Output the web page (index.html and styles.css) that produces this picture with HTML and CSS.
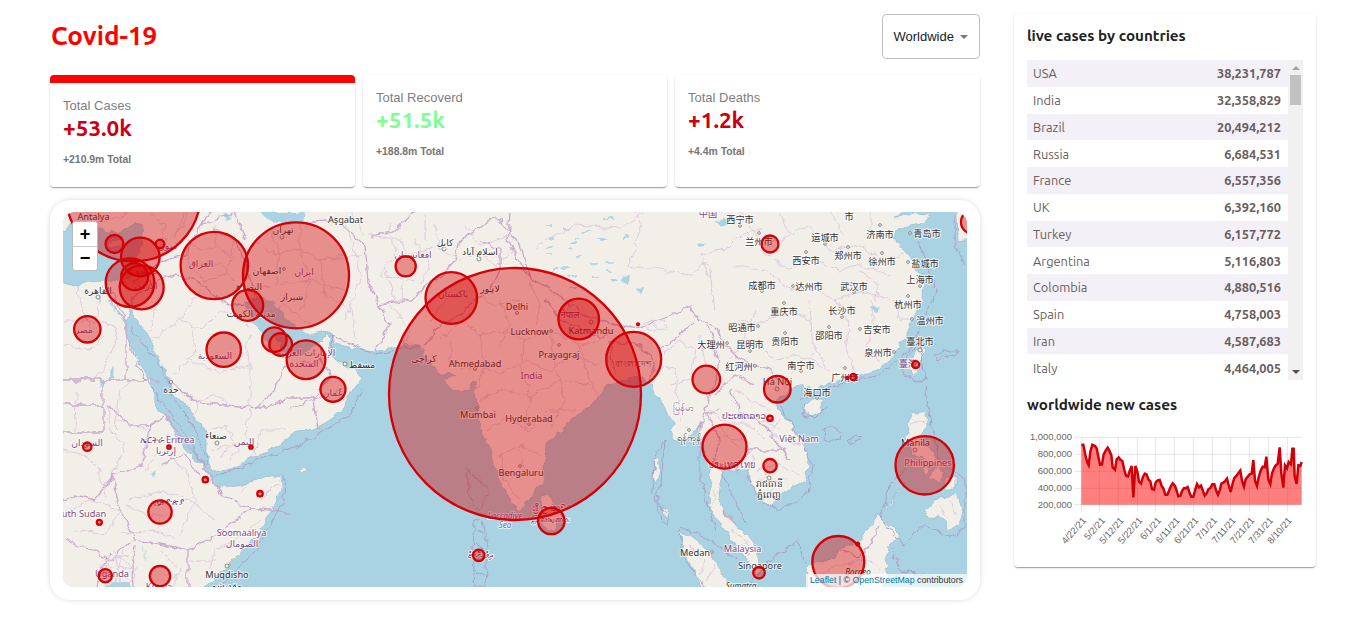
FILE: index.html
```html
<!DOCTYPE html>
<html lang="en">
<head>
<meta charset="utf-8">
<title>Covid-19</title>
<link rel="stylesheet" href="styles.css">
</head>
<body>
<div class="app">
  <main class="left">
    <header class="header">
      <h1>Covid-19</h1>
      <div class="select"><span>Worldwide</span><i class="caret"></i></div>
    </header>
    <section class="stats">
      <article class="card stat active"><p class="label">Total Cases</p><h2>+53.0k</h2><p class="total">+210.9m Total</p></article>
      <article class="card stat"><p class="label">Total Recoverd</p><h2 class="green">+51.5k</h2><p class="total">+188.8m Total</p></article>
      <article class="card stat"><p class="label">Total Deaths</p><h2>+1.2k</h2><p class="total">+4.4m Total</p></article>
    </section>
    <section class="map-frame">
      <div class="map">
        <svg class="map-svg" viewBox="63 212 904 375" width="904" height="375">
          <defs>
            <filter id="rough" filterUnits="userSpaceOnUse" x="43" y="192" width="944" height="415">
              <feTurbulence type="fractalNoise" baseFrequency="0.11" numOctaves="2" seed="7" result="n"/>
              <feDisplacementMap in="SourceGraphic" in2="n" scale="8" xChannelSelector="R" yChannelSelector="G"/>
            </filter>
          </defs>
          <rect x="63" y="212" width="904" height="375" fill="#a9d2e2"/>
          <g filter="url(#rough)">
            <g class="land">
              <path d="M50 283 63 283 75 287 87 282 107 281 120 280 130 278 133 270 137 258 141 243 143 224 133 225 117 235 98 227 80 228 72 224 63 231 50 228V190H905V212L895 216 907 215 930 213 927 221 898 230 893 237 903 248 913 260 923 283 922 297 913 320 903 340 890 360 877 370 857 377 837 382 820 387 812 397 808 385 790 388 780 397 777 407 790 423 803 440 808 460 807 480 783 493 770 507 753 487 747 470 723 470 718 493 722 510 730 522 743 530 753 543 762 566 757 574 740 552 730 535 717 520 709 505 712 480 705 452 697 429 683 442 672 440 673 423 667 410 655 393 643 376 623 380 607 385 605 392 590 405 573 418 560 433 546 444 543 483 533 493 525 505 518 512 507 495 497 473 490 450 480 427 476 400 474 380 469 388 460 393 452 389 443 379 455 375 440 374 433 367 423 354 421 344 393 347 375 351 353 348 335 344 330 331 313 335 295 326 285 318 273 301 262 297 245 302 250 315 262 335 270 346 274 334 281 342 280 355 290 354 307 353 319 342 328 333 332 355 338 363 355 368 361 378 348 397 342 411 330 420 317 428 293 433 280 445 267 452 250 459 230 469 212 471 207 457 207 437 200 423 187 405 173 396 168 377 157 357 147 332 134 318 132 300 127 322 112 306 109 298 125 323 130 343 140 363 150 380 155 400 157 408 168 418 175 433 187 450 200 463 208 472 210 480 218 488 237 485 263 477 281 474 282 490 270 513 257 537 230 563 203 590V610H50Z"/>
              <path d="M108 243 115 240 123 238 119 246 111 248Z"/>
              <path d="M541 494 551 500 560 515 557 529 548 532 542 523Z"/>
              <path d="M680 532 690 536 707 549 716 562 724 577 732 590H703L688 560Z"/>
              <path d="M803 407 814 398 825 400 820 412 811 417 803 413Z"/>
              <path d="M922 346 925 350 920 366 914 380 909 367 914 353Z"/>
              <path d="M911 413 925 410 928 424 921 438 928 450 940 458 940 465 925 460 913 454 906 436Z"/>
              <path d="M920 464 928 466 930 473 924 477Z M935 468 945 473 939 482 931 478Z M905 481 900 492 886 506 878 515 892 503Z M945 478 955 475 955 488 946 491Z"/>
              <path d="M925 512 933 500 949 498 957 492 963 512 958 525 949 530 943 518 930 517Z"/>
              <path d="M808 590 806 568 815 562 830 560 842 548 858 543 866 530 879 516 889 524 900 535 889 545 885 560 888 575 882 590Z"/>
              <path d="M952 200 957 215 958 240 967 240 980 200Z M298 469 304 466 307 469 301 472Z"/>
              <path d="M655 460 660 458 659 475 656 485 653 476Z M662 508 667 510 668 518 663 516Z"/>
            </g>
            <path class="water" d="M257 212 306 212 304 224 285 225 270 220Z M224 212 230 217 228 220 222 214Z M718 220 725 219 728 224 721 226Z M98 388 107 380 115 364 114 378 100 381Z M142 545 149 565 146 558 142 547Z M105 588 112 582 128 583 130 590Z M150 472 157 472 154 477Z M623 277 629 275 628 283 621 282Z M610 280 616 278 618 280 612 282Z M636 289 644 288 640 293Z M872 305 880 306 876 312 869 307Z M160 517 158 528 156 533Z M697 244 706 243 705 246 699 247Z"/>
            <g class="speckle"><path d="M545 225h7m12 3h6m13 4h8m-43 6h5m18 5h6m20-3h9m-60 14h7m25 2h5m7 7h8m-46 7h6m10 5h8m16 2h7m-31 10h8m6 3h5m19-27h8m-8 8h6m12-35h5m-25-18h9m-52 50h8m-1-19h4m30-8h6m-60 5h5m22-7h4m60-28h5"/></g>
            <g class="border">
              <path d="M63 380H160M126 325V380M63 432H103V405H63M132 283 160 262 185 255 200 225 212 212M131 300 165 275 192 278 230 306 248 305M215 230 235 240 246 262 252 285 258 300M200 225 235 212 246 240M168 378 180 390 195 402 260 408 290 398 314 398 331 376 320 360 285 368M314 398 318 430M290 408 345 388M255 410 275 390 285 365M105 281 128 325M103 405V380M107 405 130 425 150 425 165 415 180 435 205 465 213 484 223 495 250 508 290 512M150 425 142 465 122 472 114 475 95 500 75 495 63 500M112 473 120 510 135 540 165 545 188 550 215 535 250 510M188 550V590M135 545 132 565 133 590M63 540 90 550 110 560 132 540M160 465 185 455 200 475M95 590 100 570 112 553"/>
              <path d="M303 223 335 220 365 245 368 282 378 304 412 300 425 285 440 278 455 260 460 240 478 230 495 215M378 304 390 325 375 350M372 236 395 230 415 212M425 345 440 325 460 315 475 300 490 290 500 270 500 250 480 240M495 215 520 245 530 278 560 297 590 318 615 325 640 328 660 320 690 307 700 320 715 325 725 345 740 360 770 370 785 387M530 278 518 260 508 240 510 212M545 300 560 318 600 338 615 330M610 340 615 375M610 340 640 345 655 365 650 385M660 350 680 335 693 320M708 325 720 365 710 395 705 410 720 440 710 470M720 410 705 415 696 433M730 390 740 410 760 420 775 440 790 460M740 465 750 450 785 450M715 395 735 375 755 385M740 475 735 465M843 550 858 558 870 545 879 527M722 510 735 525"/>
            </g>
            <g class="province">
              <path d="M63 320H90L118 328 115 345 96 380M95 320 103 285M75 285 90 330M130 346 160 335 180 320 200 290M160 262 165 240 180 230 190 212M165 275 150 330M180 320 200 330 220 310 250 325M190 360 218 372 250 365 245 345 252 335M172 375 195 355 193 330M250 365V408M200 400 188 425M195 402 215 395 230 405M63 345 90 350 105 335M75 390 76 430M108 405 110 430 125 445 112 475M63 450 85 455 98 468 105 495M115 420 150 430 140 465M63 515 90 500 120 510 105 535 75 530M115 430 120 390 130 380M120 535 150 530 175 538M130 500 160 490 190 500 215 520M145 470 160 450 185 470 195 500 180 535M125 505 145 515 175 515M210 570 215 550 235 540 260 520M190 560 215 560M250 410 245 440 230 460M210 430 225 425 235 440 220 460M210 450 230 445M255 455 260 430 285 430M260 500 280 480M240 495 245 485M100 575 115 555 125 560 135 575 120 590M105 560 130 555M115 550 120 585M100 565 135 570M125 550 115 585M160 550 180 570 170 590"/>
              <path d="M185 235 200 250 215 245 232 258 225 275 205 280 190 265 185 245M215 225 216 245M200 262 220 265 235 280M235 235 230 255M255 240 275 255 300 248 320 260 345 255M270 230 280 255 275 285 255 290M300 225 300 250 310 280 300 310M280 285 310 280 345 290M320 260 325 295 350 310M345 225 355 250 360 280 345 320M370 235 400 240 410 255 440 245M390 225 395 255 380 275 415 280M405 280 400 300M415 240 430 265 420 285M435 225 440 250 460 260M465 225 480 245 510 235M475 250 495 265 515 250M385 270 395 300M425 215 425 240M350 300 355 340M390 305 410 330 405 345M330 260 365 255M350 212 365 235M265 310 285 305 310 325M150 212 165 225 160 250M85 212 100 225 130 212M185 212 175 240"/>
              <path d="M440 340 465 320 480 335 500 330 525 340 550 330 580 345 600 340M460 370 480 365 500 375 525 360 550 370 570 355 600 365M480 400 500 390 530 395 560 380 590 385M485 430 505 420 530 430 550 410 575 410M500 455 520 445 540 455M500 455 505 480 520 500M520 445 525 470 540 475M480 335 485 365 475 390M525 340 520 365 530 395 525 430M550 330 555 365 565 400 550 430M580 345 590 380 600 400M500 300 510 325 500 345M530 280 540 305 535 325M430 320 445 300 470 290 495 305 520 300M450 340 450 365"/>
              <path d="M637 212 640 230 630 265 660 270 690 275 705 262 710 270 715 310M545 240 575 225 620 228 645 212M710 280 700 255 725 250 740 235 765 230M535 250 545 240M740 212 755 235 780 240 810 225 830 250 860 245 880 260 905 255M760 250 790 270 810 260 840 270 860 265 890 275M735 265 765 270 790 290 810 285 835 300 860 290 890 300M810 300 812 340 825 365M835 300 850 325 845 350 855 370M870 300 875 325 865 345 880 360M740 320 760 325 785 310 812 320M755 340 775 360 800 355 830 370M730 360 745 335 755 310M790 375 815 355M780 212 790 235M830 212 845 235M870 212 870 235 890 235M860 270 880 285 875 300M892 300 900 320 915 320M665 355 680 340 695 350 690 380 670 385M660 365 675 370 680 420 690 430M700 335 705 365M710 410 730 425 750 425 765 440M720 435 745 440 755 460M735 390 750 400 770 410M780 420 770 435 800 445M755 470 780 465 800 475M760 480 785 480M730 400 745 415M720 425 740 450M715 490 712 510M730 530 745 540 750 555M735 545 750 548M690 545 705 560 700 575M715 565 705 580M645 322 665 320 667 330 648 331ZM655 320V330M912 425 925 422M915 440 928 435M950 500 955 515M940 505 948 520M820 575 840 565 870 560 880 570M755 415 780 430M765 470 775 500"/>
            </g>
            <g class="maritime">
              <path d="M130 328 140 340 160 365 172 395 195 430 208 465M126 335 140 370 160 400 190 440 205 470M213 478 245 465 300 445 350 415 362 390M285 475 284 500 255 550 220 587M335 355 330 335 375 354 420 346M466 470 487 487 486 500 479 510 469 495ZM474 520 482 522 487 545 485 587 475 587 473 555ZM476 530 486 535M475 545 486 550M476 573 486 574M655 455 665 440 661 480 656 500 670 520 668 525 660 518 652 490ZM680 527 705 537 735 560M680 530 683 558 705 587M700 420 700 480 710 510 715 530M720 470 740 510 745 525M747 475 760 500 780 510 808 494 812 465 795 430 780 405M800 400 818 395 835 385 880 375 910 350 937 290 918 240M805 405 802 415 815 418 828 405M900 365 920 342 925 380 912 383ZM925 386 931 425 940 460 965 480 965 530 950 537 925 525 902 545 880 516 890 485 905 470M825 430 830 425 842 432 840 440 824 442ZM848 440 858 434 861 437 852 443ZM745 590 765 565 798 540 805 565M892 547 900 570 945 580M955 215 955 245 965 265M935 355 948 350 957 350 955 357 945 355 938 361Z"/>
            </g>
          </g>

          <g class="dots"><circle cx="98" cy="297" r="2"/><circle cx="171" cy="382" r="1.6"/><circle cx="217" cy="443" r="2"/><circle cx="227" cy="566" r="2"/><circle cx="282" cy="237" r="2"/><circle cx="284" cy="269" r="1.4"/><circle cx="444" cy="249" r="2"/><circle cx="479" cy="259" r="2"/><circle cx="345" cy="364" r="2"/><circle cx="517" cy="313" r="1.5"/><circle cx="551" cy="331" r="1.4"/><circle cx="559" cy="345" r="1.4"/><circle cx="591" cy="322" r="2"/><circle cx="475" cy="369" r="1.5"/><circle cx="477" cy="408" r="1.4"/><circle cx="529" cy="424" r="1.4"/><circle cx="520" cy="466" r="1.4"/><circle cx="689" cy="430" r="1.4"/><circle cx="712" cy="552" r="1.4"/><circle cx="740" cy="226" r="1.4"/><circle cx="759" cy="233" r="1.4"/><circle cx="825" cy="244" r="1.4"/><circle cx="806" cy="252" r="1.4"/><circle cx="848" cy="247" r="1.4"/><circle cx="880" cy="225" r="1.4"/><circle cx="910" cy="233" r="1.4"/><circle cx="882" cy="253" r="1.4"/><circle cx="908" cy="262" r="1.4"/><circle cx="920" cy="286" r="1.4"/><circle cx="908" cy="296" r="1.4"/><circle cx="912" cy="319" r="1.4"/><circle cx="793" cy="286" r="1.4"/><circle cx="762" cy="291" r="1.4"/><circle cx="784" cy="303" r="1.4"/><circle cx="854" cy="292" r="1.4"/><circle cx="842" cy="317" r="1.4"/><circle cx="829" cy="327" r="1.4"/><circle cx="785" cy="333" r="1.4"/><circle cx="860" cy="329" r="1.4"/><circle cx="894" cy="352" r="1.4"/><circle cx="920" cy="350" r="2"/><circle cx="727" cy="343" r="1.4"/><circle cx="758" cy="326" r="1.4"/><circle cx="750" cy="351" r="1.4"/><circle cx="755" cy="366" r="1.4"/><circle cx="801" cy="371" r="1.4"/><circle cx="845" cy="368" r="1.4"/><circle cx="817" cy="398" r="1.4"/><circle cx="777" cy="389" r="2"/><circle cx="769" cy="478" r="2"/><circle cx="915" cy="450" r="2"/></g>
          <g class="city">
            <text x="93.500" y="220">Antalya</text><text x="98" y="294">القاهرة</text><text x="283" y="233">تهران</text><text x="267" y="274">اصفهان</text><text x="292" y="300">شیراز</text><text x="249" y="290">البصرة</text><text x="251" y="317">مدينة الكويت</text><text x="171" y="393">جدة</text><text x="216" y="439">صنعاء</text><text x="227" y="578">Muqdisho</text><text x="227" y="589">مقديشو</text><text x="345.500" y="223">Aşgabat</text><text x="445" y="246">کابل</text><text x="480" y="255">اسلام آباد</text><text x="362" y="368">مسقط</text><text x="490" y="292">لاہور</text><text x="424" y="362">کراچی</text><text x="517" y="309.500">Delhi</text><text x="529.500" y="334.500">Lucknow</text><text x="591" y="334">Katmandu</text><text x="559" y="357.500">Prayagraj</text><text x="475" y="366.500">Ahmedabad</text><text x="478" y="418">Mumbai</text><text x="529" y="421.500">Hyderabad</text><text x="521" y="476">Bengaluru</text><text x="689" y="441">ရန်ကုန်</text><text x="695" y="556">Medan</text><text x="760" y="569">Singapore</text><text x="741" y="588.500" class="italic">Sumatra</text><text x="858" y="575" class="italic">Borneo</text><text x="777.500" y="384.500">Hà Nội</text><text x="769" y="487">រាជធានី</text><text x="769" y="498">ភ្នំពេញ</text><text x="915.500" y="446">Manila</text>
            <text x="740" y="223">西宁市</text><text x="849" y="220">市</text><text x="759" y="245">兰州市</text><text x="825" y="241">运城市</text><text x="880" y="238">济南市</text><text x="927" y="237">青岛市</text><text x="806" y="264">西安市</text><text x="848" y="259">郑州市</text><text x="882" y="265">徐州市</text><text x="925" y="267">盐城市</text><text x="920" y="283">上海市</text><text x="762" y="289">成都市</text><text x="809" y="290">达州市</text><text x="854" y="290">武汉市</text><text x="908" y="308">杭州市</text><text x="784" y="315">重庆市</text><text x="842" y="314">长沙市</text><text x="930" y="324">温州市</text><text x="742" y="330.500">昭通市</text><text x="829" y="339">邵阳市</text><text x="877" y="333">吉安市</text><text x="711" y="348">大理州</text><text x="750" y="348">昆明市</text><text x="785" y="345">贵阳市</text><text x="878" y="356">泉州市</text><text x="920" y="345">臺北市</text><text x="739" y="370">红河州</text><text x="801" y="369">南宁市</text><text x="845" y="381">广州市</text><text x="817" y="396">海口市</text>
          </g>
          <g class="country">
            <text x="201" y="267">العراق</text><text x="166" y="249">سوريا</text><text x="145" y="274">دمشق</text><text x="146" y="289">الأردن</text><text x="84" y="333">مصر</text><text x="215" y="359">السعودية</text><text x="304" y="275">ایران</text><text x="413" y="258">افغانستان</text><text x="453" y="297">پاکستان</text><text x="306" y="356">الإمارات العربية</text><text x="304" y="367">المتحدة</text><text x="333" y="396">عُمان</text><text x="570" y="318">नेपाल</text><text x="633" y="367">বাংলাদেশ</text><text x="531.500" y="379">India</text><text x="708" y="217">中国</text><text x="87" y="446">السودان</text><text x="167" y="443">ኤርትራ Eritrea</text><text x="166" y="454">إرتريا</text><text x="244" y="445">اليمن</text><text x="169" y="505">ኢትዮጵያ</text><text x="84" y="516.500">uth Sudan</text><text x="112" y="576.500">Uganda</text><text x="159" y="590">Kenya</text><text x="241.500" y="535.500">Soomaaliya</text><text x="242" y="547">الصومال</text><text x="683" y="411">မြန်မာ</text><text x="744" y="419">ປະເທດລາວ</text><text x="731" y="468">ประเทศไทย</text><text x="799" y="442">Việt Nam</text><text x="742.500" y="552">Malaysia</text><text x="928" y="466">Philippines</text><text x="908" y="367">臺灣</text><text x="549" y="511">ශ්‍රී ලංකාව</text><text x="550" y="522">இலங்கை</text><text x="480" y="558">ދިވެހިރާއްޖެ</text>
          </g>
          <g class="sea"><text x="505" y="519">Laccadive</text><text x="505" y="528">Sea</text></g>

          <g class="cases">
            <circle cx="133.300" cy="194" r="67.400"/><circle cx="114.500" cy="244" r="9"/><circle cx="160" cy="244" r="4.300"/><circle cx="140.300" cy="257" r="19.300"/><circle cx="130" cy="282.700" r="24.300"/><circle cx="141.700" cy="287.300" r="22"/><circle cx="134.700" cy="276.700" r="13.500"/><circle cx="214.300" cy="265.500" r="33.700"/><circle cx="247.700" cy="305.300" r="15.500"/><circle cx="87.300" cy="329.300" r="13.200"/><circle cx="223.700" cy="349.700" r="17.200"/><circle cx="274.300" cy="339.700" r="12.300"/><circle cx="280.700" cy="344.500" r="11.400"/><circle cx="296" cy="275.300" r="53"/><circle cx="306" cy="359.700" r="19.400"/><circle cx="333" cy="389.300" r="12.500"/><circle cx="405.700" cy="266.300" r="10.100"/><circle cx="451.300" cy="298" r="25.800"/><circle cx="515" cy="394" r="126"/><circle cx="578.700" cy="319" r="20.300"/><circle cx="633.700" cy="359.300" r="27.500"/><circle cx="638" cy="324.300" r="1"/><circle cx="706.300" cy="379.500" r="13.800"/><circle cx="724.500" cy="446.700" r="22"/><circle cx="551.300" cy="521" r="13.200"/><circle cx="478.700" cy="555.300" r="5.700"/><circle cx="770" cy="244" r="8.500"/><circle cx="777.300" cy="389.200" r="13.300"/><circle cx="770" cy="418.300" r="2.700"/><circle cx="770" cy="465.700" r="6.700"/><circle cx="853.300" cy="377" r="3"/><circle cx="847.300" cy="378" r="1"/><circle cx="915.700" cy="364.700" r="3.500"/><circle cx="924.700" cy="465.300" r="29.200"/><circle cx="838.300" cy="562" r="26"/><circle cx="857.700" cy="544" r="1.400"/><circle cx="759" cy="572.700" r="5.800"/><circle cx="973" cy="222" r="12"/><circle cx="87.300" cy="446.700" r="4.200"/><circle cx="169" cy="447" r="1.700"/><circle cx="251" cy="447" r="1.700"/><circle cx="205.300" cy="479.700" r="2.700"/><circle cx="260" cy="493.700" r="2.700"/><circle cx="160" cy="512" r="11.700"/><circle cx="99.300" cy="522.300" r="2.500"/><circle cx="105.300" cy="575.700" r="6.600"/><circle cx="160" cy="576" r="10.200"/>
          </g>
        </svg>
        <div class="zoom"><span>+</span><span>−</span></div>
        <div class="credit"><a>Leaflet</a> | © <a>OpenStreetMap</a> contributors</div>
      </div>
    </section>
  </main>

  <aside class="card side">
    <h3 class="t1">live cases by countries</h3>
    <div class="table-wrap">
      <div class="table">
        <div class="row"><span>USA</span><b>38,231,787</b></div>
        <div class="row"><span>India</span><b>32,358,829</b></div>
        <div class="row"><span>Brazil</span><b>20,494,212</b></div>
        <div class="row"><span>Russia</span><b>6,684,531</b></div>
        <div class="row"><span>France</span><b>6,557,356</b></div>
        <div class="row"><span>UK</span><b>6,392,160</b></div>
        <div class="row"><span>Turkey</span><b>6,157,772</b></div>
        <div class="row"><span>Argentina</span><b>5,116,803</b></div>
        <div class="row"><span>Colombia</span><b>4,880,516</b></div>
        <div class="row"><span>Spain</span><b>4,758,003</b></div>
        <div class="row"><span>Iran</span><b>4,587,683</b></div>
        <div class="row"><span>Italy</span><b>4,464,005</b></div>
      </div>
      <div class="bar"><i class="up"></i><i class="thumb"></i><i class="down"></i></div>
    </div>
    <h3 class="t2">worldwide new cases</h3>
    <svg class="chart" viewBox="66 210 828 360" width="276" height="120">
      <path class="grid" d="M208 232H890M208 283H890M208 334H890M208 385H890M208 434H890M229 232V454M283 232V454M340 232V454M397 232V454M451 232V454M508 232V454M565 232V454M622 232V454M677 232V454M733 232V454M790 232V454M847 232V454"/>
      <path class="area" d="M229 434V254L235 254 241 285 247 308 251 316 256 275 262 254 270 258 275 265 280 290 285 314 291 313 296 283 302 272 308 263 313 272 319 285 323 322 330 329 335 298 341 292 347 300 352 303 358 330 363 347 369 349 374 333 380 318 385 412 391 318 397 335 402 365 408 371 414 350 420 341 425 344 430 358 436 364 441 387 447 389 452 367 458 361 464 360 470 378 475 385 481 404 487 404 493 390 498 378 503 370 510 378 515 392 520 409 526 408 531 393 537 384 543 385 548 381 553 397 559 410 565 410 571 388 576 372 582 382 588 377 594 393 599 407 605 400 610 388 616 384 622 373 628 373 633 390 639 404 645 388 649 371 655 368 660 364 666 356 671 375 677 396 683 370 688 354 694 348 700 340 706 332 711 362 717 380 722 358 728 350 734 343 740 341 745 300 750 362 756 378 761 352 767 332 773 320 779 322 784 290 790 358 796 372 801 340 807 325 813 315 818 312 824 262 829 340 835 383 840 316 846 325 851 306 858 313 862 266 866 266 869 350 875 372 880 316 886 318 890 306V434Z"/>
      <path class="line" d="M229 254 235 254 241 285 247 308 251 316 256 275 262 254 270 258 275 265 280 290 285 314 291 313 296 283 302 272 308 263 313 272 319 285 323 322 330 329 335 298 341 292 347 300 352 303 358 330 363 347 369 349 374 333 380 318 385 412 391 318 397 335 402 365 408 371 414 350 420 341 425 344 430 358 436 364 441 387 447 389 452 367 458 361 464 360 470 378 475 385 481 404 487 404 493 390 498 378 503 370 510 378 515 392 520 409 526 408 531 393 537 384 543 385 548 381 553 397 559 410 565 410 571 388 576 372 582 382 588 377 594 393 599 407 605 400 610 388 616 384 622 373 628 373 633 390 639 404 645 388 649 371 655 368 660 364 666 356 671 375 677 396 683 370 688 354 694 348 700 340 706 332 711 362 717 380 722 358 728 350 734 343 740 341 745 300 750 362 756 378 761 352 767 332 773 320 779 322 784 290 790 358 796 372 801 340 807 325 813 315 818 312 824 262 829 340 835 383 840 316 846 325 851 306 858 313 862 266 866 266 869 350 875 372 880 316 886 318 890 306"/>
      <g class="axis">
        <text x="201" y="240" textLength="126" lengthAdjust="spacingAndGlyphs">1,000,000</text><text x="201" y="291" textLength="103" lengthAdjust="spacingAndGlyphs">800,000</text><text x="201" y="342" textLength="103" lengthAdjust="spacingAndGlyphs">600,000</text><text x="201" y="393" textLength="103" lengthAdjust="spacingAndGlyphs">400,000</text><text x="201" y="443" textLength="103" lengthAdjust="spacingAndGlyphs">200,000</text>
        <g class="dates"><text transform="translate(245 482) rotate(-49)">4/22/21</text><text transform="translate(302 482) rotate(-49)">5/2/21</text><text transform="translate(358 482) rotate(-49)">5/12/21</text><text transform="translate(414 482) rotate(-49)">5/22/21</text><text transform="translate(470 482) rotate(-49)">6/1/21</text><text transform="translate(526 482) rotate(-49)">6/11/21</text><text transform="translate(582 482) rotate(-49)">6/21/21</text><text transform="translate(638 482) rotate(-49)">7/1/21</text><text transform="translate(694 482) rotate(-49)">7/11/21</text><text transform="translate(750 482) rotate(-49)">7/21/21</text><text transform="translate(806 482) rotate(-49)">7/31/21</text><text transform="translate(862 482) rotate(-49)">8/10/21</text></g>
      </g>
    </svg>
  </aside>
</div>
</body>
</html>
```
FILE: styles.css
```css
* { box-sizing: border-box; margin: 0; padding: 0; }
body { background: #fff; overflow: hidden; font-family: Ubuntu, "Noto Sans", sans-serif; }
.app { display: flex; gap: 34px; padding: 14px 50px 0; height: 635px; align-items: flex-start; }
.left { width: 930px; }
.header { display: flex; justify-content: space-between; height: 45px; }
h1 { color: #ff0000; font-size: 26px; line-height: 44px; font-weight: 700; padding-left: 1px; }
.select { width: 98px; height: 45px; border: 1px solid #c0c0c0; border-radius: 4px; display: flex; align-items: center; gap: 6px; padding-left: 10.500px; font: 13px "Liberation Sans", sans-serif; color: #212121; }
.caret { border: 4px solid transparent; border-top-color: #757575; border-bottom: 0; }
.card { background: #fff; border-radius: 4px; box-shadow: 0 2px 1px -1px rgba(0,0,0,.2), 0 1px 1px 0 rgba(0,0,0,.14), 0 1px 3px 0 rgba(0,0,0,.12); }
.stats { display: grid; grid-template-columns: 305px 304px 305px; gap: 8px; margin-top: 16px; }
.stat { height: 112px; padding: 14px 13px; }
.active { border-top: 8px solid #ff0000; }
.label { font: 13px/18px "Liberation Sans", sans-serif; color: #808080; }
.stat h2 { color: #cc0010; font-size: 22.500px; line-height: 25px; font-weight: 700; }
.stat .green { color: #7dff93; }
.total { font: 700 10.400px/14px "Liberation Sans", sans-serif; color: #757575; margin-top: 13px; }
.map-frame { margin-top: 13px; height: 400px; padding: 12px 13px 13px; border-radius: 20px; background: #fff; box-shadow: 0 0 6px -1px rgba(0,0,0,.2); }
.map { width: 904px; height: 375px; border-radius: 12px; overflow: hidden; position: relative; }
.map-svg { display: block; }
.land { fill: #f2efe9; stroke: #9dbfd3; stroke-width: .8; }
.water { fill: #a9d2e2; }
.speckle { fill: none; stroke: #a0d3e6; stroke-width: 1.500; }
.border { fill: none; stroke: #c9a9cc; stroke-width: 1.300; }
.province { fill: none; stroke: #dcc6dc; stroke-width: .9; }
.maritime { fill: none; stroke: #a99ac5; stroke-width: .9; }
.dots { fill: #f2efe9; stroke: #666; stroke-width: .7; }
.city, .country, .sea { font-family: "Noto Sans", "Noto Sans CJK SC", "DejaVu Sans", sans-serif; font-size: 9.200px; text-anchor: middle; paint-order: stroke; stroke: rgba(255,255,255,.7); stroke-width: 2px; stroke-linejoin: round; }
.city { fill: #333; }
.country { fill: #82497f; }
.sea { fill: #5b72c0; font-style: italic; font-size: 8px; }
.italic { font-style: italic; font-size: 8px; }
.cases circle { fill: #d40000; fill-opacity: .4; stroke: #d40006; stroke-width: 2.300; }
.zoom { position: absolute; left: 9px; top: 9px; width: 26px; height: 50px; border: 1px solid #bbb; border-radius: 3px; background: #fff; display: grid; grid-template-rows: 24px 24px; overflow: hidden; font: 700 18px/24px "Liberation Sans", sans-serif; text-align: center; }
.zoom span + span { border-top: 1px solid #ccc; line-height: 22px; }
.credit { position: absolute; right: 0; bottom: 0; background: rgba(255,255,255,.7); height: 13px; padding: 0 4px; font: 8.800px/13px "Liberation Sans", sans-serif; color: #333; white-space: nowrap; }
.credit a { color: #0078a8; }
.side { width: 302px; height: 553px; padding: 0 13px; }
h3 { font-size: 15.210px; line-height: 20px; color: #212121; font-weight: 700; white-space: nowrap; }
.t1 { padding-top: 12px; height: 46px; }
.table-wrap { display: flex; height: 320px; overflow: hidden; }
.table { width: 261px; }
.row { height: 26.750px; padding: 0 7px 0 6px; display: flex; align-items: center; justify-content: space-between; color: #6a5d5d; font-size: 12.800px; }
.row:nth-child(odd) { background: #f3f0f7; }
.bar { width: 15px; background: #f1f1f1; display: flex; flex-direction: column; align-items: center; padding: 6px 0; }
.up { border: 4px solid transparent; border-bottom-color: #a3a3a3; border-top: 0; }
.thumb { width: 11px; height: 30px; background: #c1c1c1; margin-top: 5px; }
.down { border: 4px solid transparent; border-top-color: #505050; border-bottom: 0; margin-top: auto; }
.t2 { margin-top: 15px; }
.chart { display: block; margin-top: 15px; overflow: visible; }
.grid { fill: none; stroke: rgba(0,0,0,.1); stroke-width: 3; }
.area { fill: rgba(255,0,0,.5); }
.line { fill: none; stroke: #d0000a; stroke-width: 7.500; }
.axis { font-family: "Liberation Sans", sans-serif; font-size: 26px; fill: #666; text-anchor: end; }
.dates { font-size: 28.500px; }
```
